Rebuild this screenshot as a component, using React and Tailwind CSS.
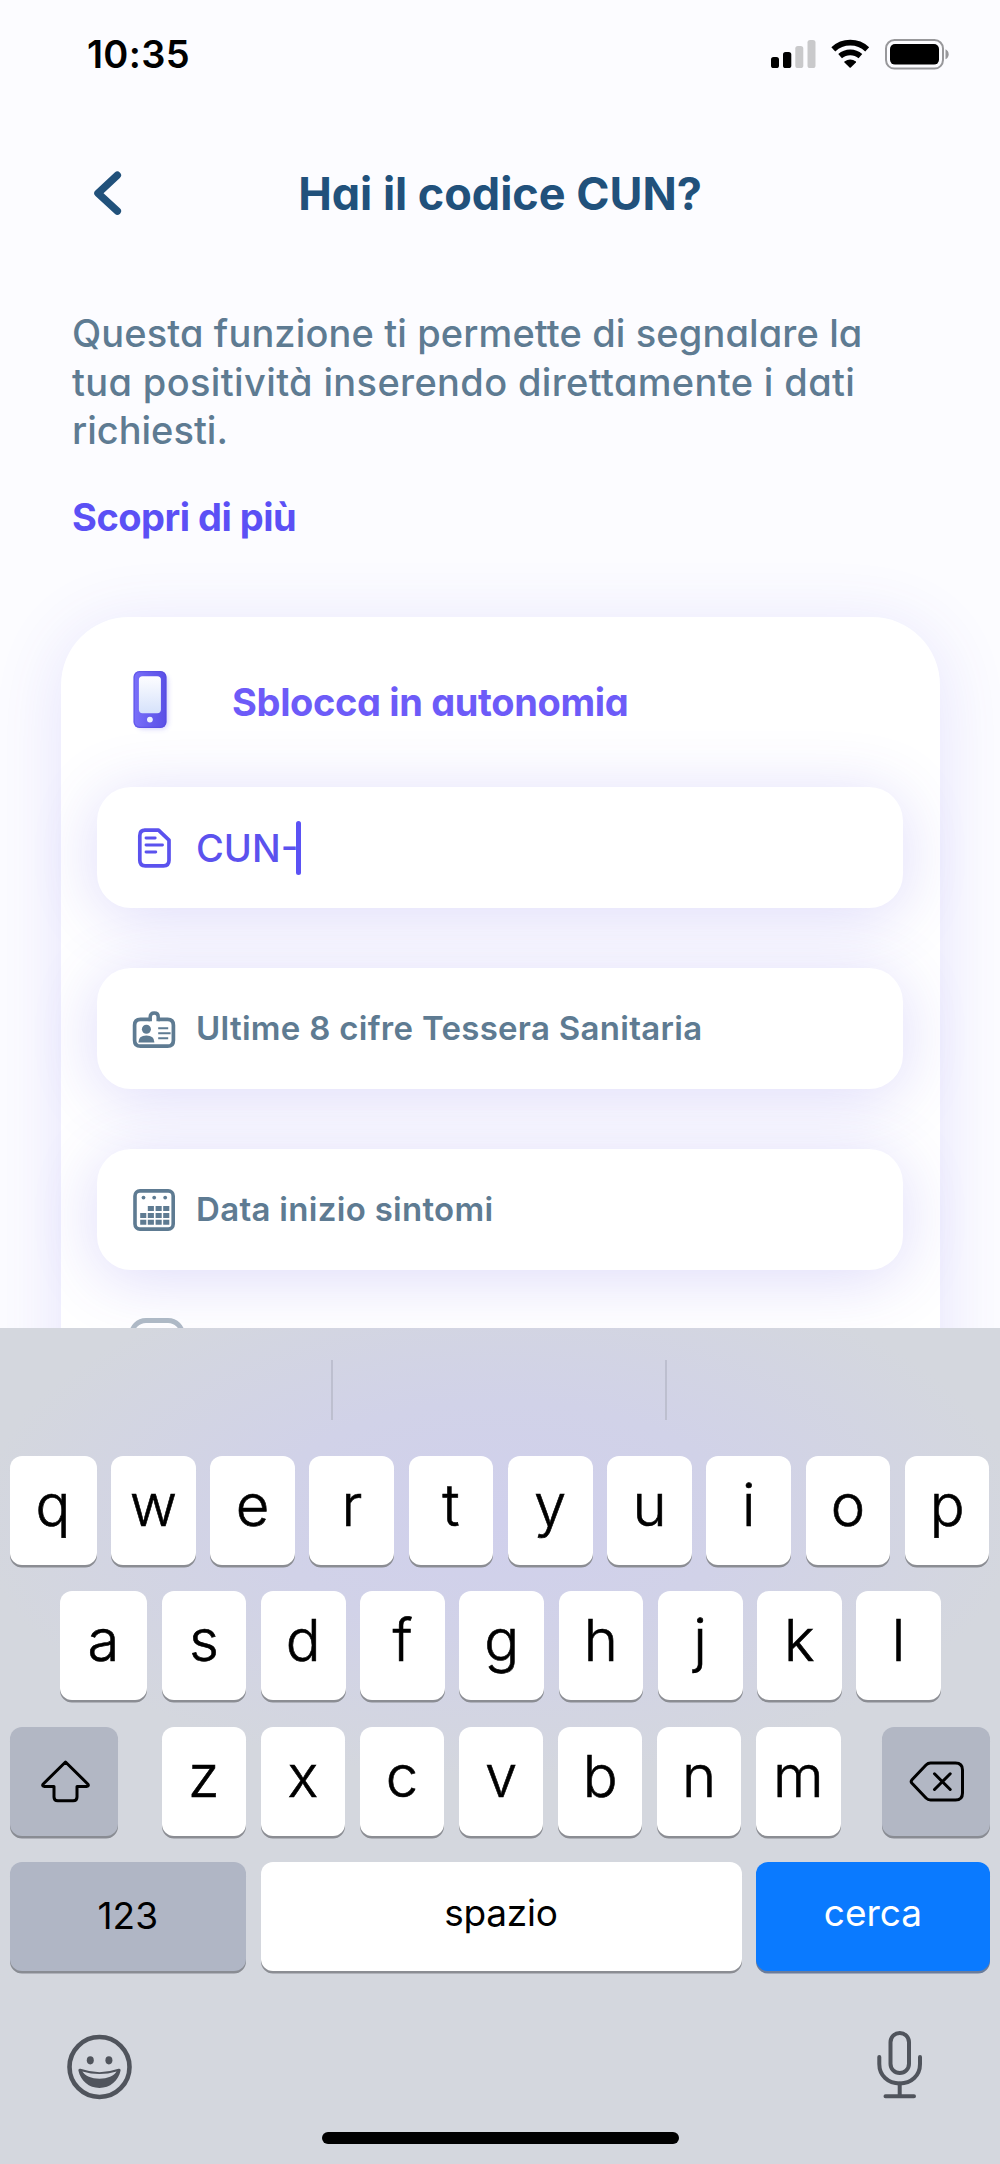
const ROW_1 = ["q", "w", "e", "r", "t", "y", "u", "i", "o", "p"];
const ROW_2 = ["a", "s", "d", "f", "g", "h", "j", "k", "l"];
const ROW_3 = ["z", "x", "c", "v", "b", "n", "m"];

function StatusBar() {
  return (
    <div className="flex h-[108px] shrink-0 items-center justify-between pr-[51px] pl-[87px]">
      <span className="text-[38px] leading-none font-semibold tracking-[0.3px] text-black">10:35</span>
      <div className="flex items-center gap-[15px]">
        <svg className="h-7 w-[45px]" viewBox="0 0 45 28">
          <rect x="0" y="17" width="8" height="11" rx="2.6" fill="#000" />
          <rect x="12" y="12" width="8.3" height="16" rx="2.6" fill="#000" />
          <rect x="24.3" y="6" width="8" height="22" rx="2.6" fill="#c9c9cb" />
          <rect x="36.5" y="0" width="8" height="28" rx="2.6" fill="#c9c9cb" />
        </svg>
        <svg className="h-[30px] w-[39px]" viewBox="0 0 39 30">
          <path d="M2.3 10.3 A25 25 0 0 1 36.2 10.3" fill="none" stroke="#000" strokeWidth="5.8" />
          <path d="M9.1 17.2 A15.3 15.3 0 0 1 29.4 17.2" fill="none" stroke="#000" strokeWidth="5.6" />
          <path d="M13.4 22.6 Q19.2 18.2 25 22.6 Q25.2 23 24.9 23.4 L19.8 28.6 Q19.2 29 18.6 28.6 L13.5 23.4 Q13.2 23 13.4 22.6Z" fill="#000" />
        </svg>
        <svg className="h-[31px] w-[64px]" viewBox="0 0 64 31">
          <rect x="1" y="1" width="57" height="28.6" rx="8.5" fill="none" stroke="#98989b" strokeWidth="2" />
          <rect x="5" y="5" width="49" height="20.6" rx="5" fill="#000" />
          <path d="M60.5 10.3 Q63.7 12 63.7 15.2 Q63.7 18.6 60.5 20.3Z" fill="#98989b" />
        </svg>
      </div>
    </div>
  );
}

function PhoneIcon() {
  return (
    <svg className="mb-1 h-[72px] w-12 shrink-0" viewBox="0 0 48 72">
      <defs>
        <linearGradient id="body" x1="0" y1="0" x2="1" y2="0">
          <stop offset="0" stopColor="#7a70fb" />
          <stop offset="0.45" stopColor="#6a60f0" />
          <stop offset="1" stopColor="#5a4fe6" />
        </linearGradient>
        <linearGradient id="glass" x1="0" y1="0" x2="0" y2="1">
          <stop offset="0" stopColor="#fdfdff" />
          <stop offset="1" stopColor="#d6e2fb" />
        </linearGradient>
        <filter id="soft" x="-40%" y="-40%" width="180%" height="180%">
          <feGaussianBlur stdDeviation="2.5" />
        </filter>
      </defs>
      <rect x="9" y="11" width="31" height="54" rx="6" fill="#6a60f0" opacity="0.3" filter="url(#soft)" />
      <rect x="5.5" y="7" width="33" height="57" rx="6" fill="url(#body)" />
      <rect x="6.2" y="7.7" width="31.6" height="55.6" rx="5.4" fill="none" stroke="#564be0" strokeWidth="1.2" opacity="0.6" />
      <rect x="10.9" y="12.2" width="22" height="37" rx="3.6" fill="url(#glass)" />
      <circle cx="21.9" cy="55.6" r="2.9" fill="#eef1ff" />
    </svg>
  );
}

function DocumentIcon() {
  return (
    <svg className="h-[42px] w-11" viewBox="0 0 44 42" fill="none" stroke="#5b52ee" strokeLinecap="round" strokeLinejoin="round">
      <path d="M12.5 3.2H26.5L37 13.2V33.3Q37 38.8 31.5 38.8H13.3Q7.8 38.8 7.8 33.3V8.7Q7.8 3.2 13.3 3.2Z" strokeWidth="3.7" />
      <path d="M14 11H23.2M14 18H30.5M14 25H23.8" strokeWidth="2.9" />
    </svg>
  );
}

function BadgeIcon() {
  return (
    <svg className="h-11 w-11" viewBox="0 0 44 44" fill="none" stroke="#5e7b92">
      <path d="M18.2 12.4H8.5Q2.6 12.4 2.6 18.3V33.2Q2.6 39.2 8.5 39.2H35.6Q41.4 39.2 41.4 33.2V18.3Q41.4 12.4 35.6 12.4H26.2" strokeWidth="3.7" />
      <path d="M18.2 14.2V9.7Q18.2 6.1 22.2 6.1Q26.2 6.1 26.2 9.7V14.2" strokeWidth="3.5" />
      <circle cx="14.4" cy="22.3" r="4.5" fill="#5e7b92" stroke="none" />
      <path d="M6.4 35.4Q6.4 28.4 14.4 28.4Q22.4 28.4 22.4 35.4Z" fill="#5e7b92" stroke="none" />
      <path d="M26.2 21.2H36.2M26.2 26.2H38.6M26.2 31.2H36.2" strokeWidth="1.9" />
    </svg>
  );
}

function CalendarIcon() {
  return (
    <svg className="h-11 w-11" viewBox="0 0 44 44" fill="#5e7b92">
      <rect x="3" y="2.9" width="38.2" height="38.2" rx="5" fill="none" stroke="#5e7b92" strokeWidth="3.6" />
      <circle cx="11.5" cy="9.6" r="1.9" />
      <circle cx="22.2" cy="9.6" r="1.9" />
      <circle cx="33.2" cy="9.6" r="1.9" />
      <path d="M15.8 18h6.1v5h-6.1zM23.6 18h6.1v5h-6.1zM31.2 18h6.1v5h-6.1z" />
      <path d="M8.2 25h6.1v5H8.2zM15.8 25h6.1v5h-6.1zM23.6 25h6.1v5h-6.1zM31.2 25h6.1v5h-6.1z" />
      <path d="M8.2 31.8h6.1v5H8.2zM15.8 31.8h6.1v5h-6.1zM23.6 31.8h6.1v5h-6.1zM31.2 31.8h6.1v5h-6.1z" />
    </svg>
  );
}

function Field({ icon, children }) {
  return (
    <div className="flex h-[121px] items-center gap-5 rounded-[34px] bg-white pl-[35px] shadow-[0_8px_66px_rgba(84,72,232,0.2)]">
      {icon}
      {children}
    </div>
  );
}

function Key({ children, lead }) {
  return (
    <div className={`flex h-[109px] items-center justify-center rounded-[12px] bg-white pb-[11px] text-[58px] leading-none font-light text-black shadow-[0_2.5px_0_#8b8d93] [-webkit-text-stroke:0.6px_black] ${lead ? "w-[87px] shrink-0" : "flex-1"}`}>
      {children}
    </div>
  );
}

function Keyboard() {
  return (
    <div className="flex h-[836px] shrink-0 flex-col bg-[#d4d7de] bg-[radial-gradient(ellipse_520px_260px_at_500px_190px,#d0d0ec_0%,#d1d2e8_45%,#d4d7de_100%)]">
      <div className="flex h-[128px] items-start justify-evenly pt-8 pr-[2px]">
        <div className="h-[60px] w-[2px] bg-[#bdbfcf]" />
        <div className="h-[60px] w-[2px] bg-[#bdbfcf]" />
      </div>
      <div className="flex flex-col gap-[26.4px]">
        <div className="flex gap-[14.5px] pr-[10.5px] pl-[9.5px]">
          {ROW_1.map((k, i) => <Key key={k} lead={i === 0}>{k}</Key>)}
        </div>
        <div className="flex gap-[14.5px] pr-[59px] pl-[60px]">
          {ROW_2.map((k, i) => <Key key={k} lead={i === 0}>{k}</Key>)}
        </div>
        <div className="flex pr-[10px] pl-[9.5px]">
          <div className="flex h-[109px] w-[108.5px] items-center justify-center rounded-[12px] bg-[#b2b7c4] shadow-[0_2.5px_0_#898c93]">
            <svg className="h-12 w-14" viewBox="0 0 56 48" fill="none" stroke="#000" strokeWidth="3" strokeLinejoin="round">
              <path d="M29.5 5L52 27.2Q53 29 51 29.4H41V40Q41 43.8 37.2 43.8H21.8Q18 43.8 18 40V29.4H8Q6 29 7 27.2Z" />
            </svg>
          </div>
          <div className="ml-[43.5px] flex w-[679px] gap-[14.5px]">
            {ROW_3.map((k) => <Key key={k}>{k}</Key>)}
          </div>
          <div className="ml-auto flex h-[109px] w-[108.5px] items-center justify-center rounded-[12px] bg-[#b2b7c4] shadow-[0_2.5px_0_#898c93]">
            <svg className="h-12 w-14" viewBox="0 0 56 48" fill="none" stroke="#000" strokeWidth="3" strokeLinecap="round" strokeLinejoin="round">
              <path d="M22.5 6H47.5Q54.5 6 54.5 13V36Q54.5 43 47.5 43H22.5Q20 43 18 41L4 26.3Q2.4 24.5 4 22.7L18 8Q20 6 22.5 6Z" />
              <path d="M26.5 16.8L42.2 32.5M42.2 16.8L26.5 32.5" />
            </svg>
          </div>
        </div>
        <div className="flex gap-[14.5px] pr-[10px] pl-[9.5px] text-[37px] leading-none text-black">
          <div className="flex h-[109px] w-[236.5px] items-center justify-center rounded-[12px] bg-[#b0b6c5] pb-[2px] shadow-[0_2.5px_0_#898c93]">123</div>
          <div className="flex h-[109px] flex-1 items-center justify-center rounded-[12px] bg-white pb-2 tracking-[-0.2px] shadow-[0_2.5px_0_#8b8d93]">spazio</div>
          <div className="flex h-[109px] w-[234px] items-center justify-center rounded-[12px] bg-[#0a7aff] pb-2 text-white shadow-[0_2.5px_0_#6a7c9b]">cerca</div>
        </div>
      </div>
      <div className="flex items-start justify-between pt-[58px] pr-[76px] pl-[66px]">
        <svg className="mt-[5px] h-[67px] w-[67px]" viewBox="0 0 67 67">
          <circle cx="33.5" cy="33" r="30" fill="none" stroke="#50545c" strokeWidth="4.6" />
          <ellipse cx="24.3" cy="26.3" rx="3.5" ry="4.1" fill="#50545c" />
          <ellipse cx="42.9" cy="26.3" rx="3.5" ry="4.1" fill="#50545c" />
          <path d="M14.5 34.8Q33.5 41.5 52.5 34.8Q54.8 34.2 54.6 36.6C52.5 47 44 54 33.5 54S14.5 47 12.4 36.6Q12.2 34.2 14.5 34.8ZM16.4 37.6C19 42 25.5 44.8 33.5 44.8S48 42 50.6 37.6Q33.5 42.6 16.4 37.6Z" fill="#50545c" fillRule="evenodd" />
        </svg>
        <svg className="h-[72px] w-[48px]" viewBox="0 0 48 72" fill="none" stroke="#50545c" strokeWidth="4" strokeLinecap="round">
          <rect x="14.5" y="4" width="18.5" height="40" rx="9.25" />
          <path d="M3.3 28V35C3.3 46.5 12 54.5 23.7 54.5S44 46.5 44 35V28" />
          <path d="M23.7 54.5V67M9.5 67.2H38" />
        </svg>
      </div>
      <div className="mt-auto mb-5 h-3 w-[357px] self-center rounded-full bg-black" />
    </div>
  );
}

export default function App() {
  return (
    <div className="flex h-[2164px] w-[1000px] flex-col overflow-hidden bg-[#fcfcff] font-['Inter','Liberation_Sans',sans-serif]">
      <div className="flex h-[1328px] shrink-0 flex-col overflow-hidden">
        <StatusBar />
        <header className="grid h-[171px] shrink-0 grid-cols-[130px_1fr_130px] items-center">
          <svg className="ml-[90px] h-12 w-9" viewBox="0 0 36 48" fill="none" stroke="#21517b" strokeWidth="7.5" strokeLinecap="round" strokeLinejoin="round">
            <path d="M27.3 5.3L8 23.3L27.3 41.1" />
          </svg>
          <h1 className="text-center text-[45px] leading-none font-bold tracking-[-0.03px] text-[#21517b] [font-feature-settings:'cv11']">Hai il codice CUN?</h1>
        </header>
        <section className="shrink-0 pt-[30px] pl-[72px] [font-feature-settings:'cv11']">
          <p className="text-[38px] leading-[48.7px] font-medium whitespace-nowrap text-[#5e7b92]">
            <span className="block tracking-[0.12px]">Questa funzione ti permette di segnalare la</span>
            <span className="block tracking-[0.36px]">tua positività inserendo direttamente i dati</span>
            <span className="block">richiesti.</span>
          </p>
          <a className="mt-[38px] block text-[38px] leading-[48px] font-bold tracking-[-0.5px] text-[#5b50f5]">Scopri di più</a>
        </section>
        <section className="mx-auto mt-[76px] h-[800px] w-[879px] shrink-0 rounded-t-[68px] bg-white px-[36.5px] shadow-[0_10px_70px_rgba(84,72,232,0.14)]">
          <div className="flex h-[170px] items-center pl-[31px]">
            <PhoneIcon />
            <h2 className="ml-[56px] text-[38px] leading-none font-bold tracking-[-0.35px] text-[#6d5bf8] [font-feature-settings:'cv11']">Sblocca in autonomia</h2>
          </div>
          <div className="flex flex-col gap-[60px]">
            <Field icon={<DocumentIcon />}>
              <div className="flex items-center text-[38px] leading-none font-medium text-[#5b52ee]">
                CUN-
                <span className="-ml-[2px] h-[54px] w-[5px] rounded-full bg-[#5b52f5]" />
              </div>
            </Field>
            <Field icon={<BadgeIcon />}>
              <span className="text-[33px] leading-none font-semibold tracking-[0.29px] text-[#5e7b92]">Ultime 8 cifre Tessera Sanitaria</span>
            </Field>
            <Field icon={<CalendarIcon />}>
              <span className="text-[33px] leading-none font-semibold tracking-[0.3px] text-[#5e7b92]">Data inizio sintomi</span>
            </Field>
          </div>
          <div className="mt-12 ml-8 h-14 w-14 rounded-[17px] border-[5px] border-[#b0bbc6]" />
        </section>
      </div>
      <Keyboard />
    </div>
  );
}
